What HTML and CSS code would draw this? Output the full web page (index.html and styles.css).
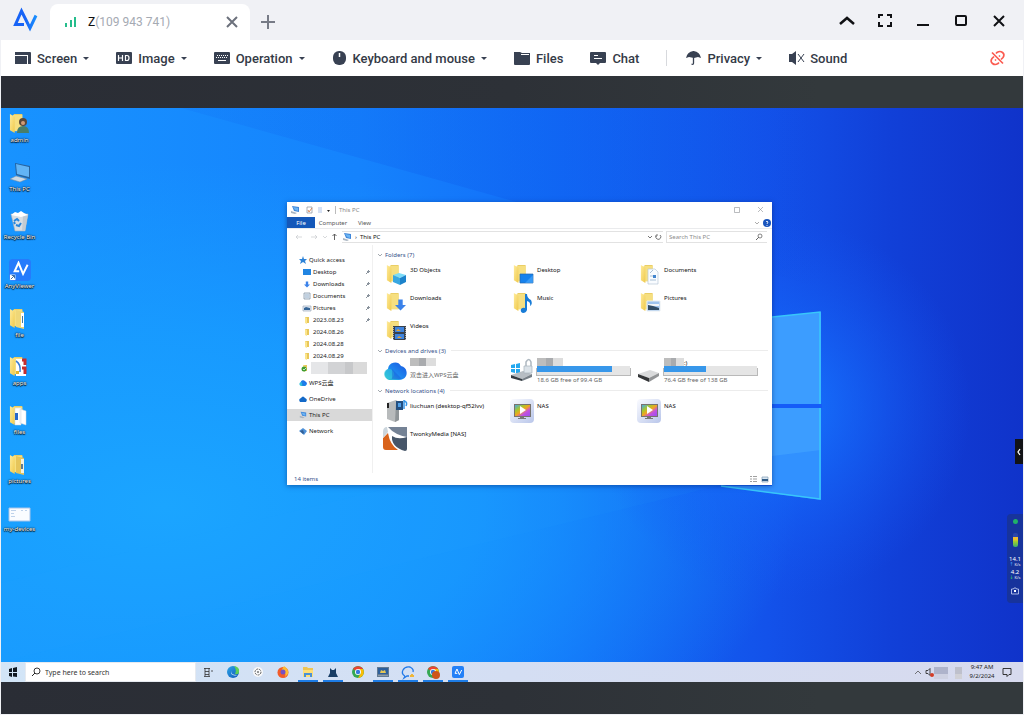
FILE: index.html
```html
<!DOCTYPE html>
<html lang="en">
<head>
<meta charset="utf-8">
<title>AnyViewer</title>
<link rel="stylesheet" href="styles.css">
</head>
<body>
<svg class="defs" aria-hidden="true">
  <defs>
    <linearGradient id="fold" x1="0" y1="0" x2="1" y2="1"><stop offset="0" stop-color="#ffeb9a"/><stop offset="1" stop-color="#efc94c"/></linearGradient>
    <linearGradient id="brandg" gradientUnits="userSpaceOnUse" x1="0" y1="0" x2="26" y2="0"><stop offset="0" stop-color="#1763f6"/><stop offset=".5" stop-color="#1763f6"/><stop offset="1" stop-color="#1a96ff"/></linearGradient>
    <linearGradient id="cloudg" x1="0" y1="1" x2="1" y2="0"><stop offset="0" stop-color="#37d3c9"/><stop offset=".4" stop-color="#1e8cf0"/><stop offset="1" stop-color="#1a55e0"/></linearGradient>
    <linearGradient id="edgeg" x1="0" y1="0" x2="1" y2="1"><stop offset="0" stop-color="#2aa6e8"/><stop offset="1" stop-color="#1257b8"/></linearGradient>
    <linearGradient id="nasg" x1="0" y1="0" x2="1" y2="1"><stop offset="0" stop-color="#fafbff"/><stop offset="1" stop-color="#b9c6ea"/></linearGradient>
    <linearGradient id="rainbow" x1="0" y1="0" x2="1" y2="1"><stop offset="0" stop-color="#45a8e8"/><stop offset=".3" stop-color="#a8c62c"/><stop offset=".5" stop-color="#f2a51f"/><stop offset=".7" stop-color="#c451df"/><stop offset="1" stop-color="#9a50f0"/></linearGradient>
    <symbol id="folder" viewBox="0 0 20 22"><path fill="#e9cc62" d="M5 1h9v18H5z"/><path fill="#f6df80" d="M4 2h10v17H4z"/><path fill="url(#fold)" d="M1 1l5 3v17l-5-3z"/></symbol>
    <symbol id="minifolder" viewBox="0 0 8 8"><path fill="#e8c75a" d="M2 1h4v6H2z"/><path fill="#fbe58c" d="M2 1l2 1v6L2 7z"/></symbol>
    <symbol id="pc" viewBox="0 0 10 10"><path fill="#3f86d9" d="M2 1l7 1v5L4 6z"/><path fill="#6bb4f3" d="M3 2l5 1v3L5 5z"/><path fill="#a9b4c0" d="M1 6l3 1 3 1-2 1-4-1z"/></symbol>
    <symbol id="cloud" viewBox="0 0 24 20"><path fill="url(#cloudg)" d="M6 19a6 6 0 01-1-11 7 7 0 0113-3 7 7 0 012 13q-2 1-4 1z"/><circle cx="6" cy="13" r="5" fill="#34c8dc" opacity=".6"/><path fill="#164cd0" opacity=".35" d="M9 8l10 10H9z"/></symbol>
    <symbol id="arrowd" viewBox="0 0 10 10"><path fill="#3b82ea" d="M3 0h4v5h3L5 10 0 5h3z"/></symbol>
    <symbol id="nas" viewBox="0 0 24 24"><rect width="24" height="24" rx="4" fill="url(#nasg)"/><rect x="4" y="5" width="17" height="13" fill="#77736e"/><rect x="5" y="6" width="15" height="11" fill="url(#rainbow)"/><path fill="#fff" d="M10 7l6 4-6 4z"/><path fill="#777" d="M10 18h4v1h2v1H8v-1h2z"/></symbol>
    <symbol id="av" viewBox="0 0 26 24"><path fill="none" stroke="currentColor" stroke-width="3" stroke-linejoin="miter" d="M11 16H4L10 3l7 17 7-14"/></symbol>
    <symbol id="pin" viewBox="0 0 6 6"><path d="M3 1l2 2M4 2L2 4M2 2l2 2M3 3L1 5" stroke="#8a939d" fill="none"/></symbol>
    <symbol id="chev" viewBox="0 0 6 6"><path d="M1 2l2 2 2-2" stroke="#8c939b" fill="none" stroke-width=".8"/></symbol>
    <symbol id="chrome" viewBox="0 0 12 12"><circle cx="6" cy="6" r="6" fill="#35a853"/><path fill="#e94335" d="M6 6L1 3a6 6 0 0110 0z"/><path fill="#fbbc05" d="M6 3h5a6 6 0 01-5 9l3-5z"/><circle cx="6" cy="6" r="3" fill="#fff"/><circle cx="6" cy="6" r="2.200" fill="#3579e0"/></symbol>
  </defs>
</svg>
<div class="app">
  <header class="titlebar">
    <svg class="brand" viewBox="0 0 26 26"><path fill="none" stroke="url(#brandg)" stroke-width="3" stroke-miterlimit="6" d="M12 17.500H3.500L9.500 4l8.500 17 6-12.500"/></svg>
    <div class="tab">
      <svg class="signal" viewBox="0 0 12 12"><path fill="#25bd8c" d="M0 7h2v4H0zM5 4h2v7H5zM9 1h2v10H9z"/></svg>
      <span class="tab-name">Z<span class="muted">(109 943 741)</span></span>
      <button class="plain" aria-label="Close tab"><svg class="i12" viewBox="0 0 12 12"><path d="M1 1l10 10M11 1L1 11" stroke="#6c717c" stroke-width="2"/></svg></button>
    </div>
    <button class="plain add" aria-label="New tab"><svg class="i14" viewBox="0 0 14 14"><path d="M7 0v14M0 7h14" stroke="#777b86" stroke-width="2"/></svg></button>
    <div class="controls">
      <button class="plain" aria-label="Collapse"><svg class="i16" viewBox="0 0 16 16"><path d="M1 11l7-6 7 6" fill="none" stroke="#101114" stroke-width="2.500"/></svg></button>
      <button class="plain" aria-label="Full screen"><svg class="i16" viewBox="0 0 16 16"><path d="M2 5V2h4M10 2h4v3M14 9v4h-4M6 13H2V9" fill="none" stroke="#101114" stroke-width="2"/></svg></button>
      <button class="plain" aria-label="Minimize"><svg class="i16" viewBox="0 0 16 16"><path d="M2 12h12" stroke="#101114" stroke-width="2"/></svg></button>
      <button class="plain" aria-label="Maximize"><svg class="i16" viewBox="0 0 16 16"><rect x="3" y="3" width="10" height="9" rx="1" fill="none" stroke="#101114" stroke-width="2"/></svg></button>
      <button class="plain" aria-label="Close"><svg class="i16" viewBox="0 0 16 16"><path d="M3 3l10 10M13 3L3 13" stroke="#101114" stroke-width="2"/></svg></button>
    </div>
  </header>
  <nav class="toolbar">
    <button class="tool"><svg class="i16" viewBox="0 0 16 16"><path fill="#384152" d="M0 2h15q1 0 1 1v11h-3V5H0z"/><rect y="6" width="12" height="8" fill="#384152"/></svg>Screen<i class="caret"></i></button>
    <button class="tool"><svg class="i16" viewBox="0 0 16 16"><rect y="2" width="16" height="12" rx="1" fill="#384152"/><path fill="none" stroke="#fff" stroke-width="1.200" d="M2.500 5v6M6.500 5v6M2.500 8h4M9.500 5.500v5h1.500q2 0 2-2.500t-2-2.500z"/></svg>Image<i class="caret"></i></button>
    <button class="tool"><svg class="i16" viewBox="0 0 16 16"><rect y="2" width="16" height="12" rx="1" fill="#384152"/><path stroke="#fff" stroke-dasharray="1 1" d="M3 5.500h11M2 7.500h11"/><path stroke="#fff" d="M4 10.500h8"/></svg>Operation<i class="caret"></i></button>
    <button class="tool"><svg class="i15" viewBox="0 0 15 16"><rect x="1" y="1" width="13" height="14" rx="6" fill="#384152"/><path stroke="#fff" stroke-width="1.500" d="M7.500 3v4"/></svg>Keyboard and mouse<i class="caret"></i></button>
    <button class="tool"><svg class="i16" viewBox="0 0 16 16"><path fill="#384152" d="M0 2h6l2 1h8v11q0 1-1 1H1q-1 0-1-1z"/><path stroke="#fff" d="M7 4.500h8"/></svg>Files</button>
    <button class="tool"><svg class="i16" viewBox="0 0 16 16"><path fill="#384152" d="M1 2h14q1 0 1 1v9q0 1-1 1h-5l-2 2-2-2H1q-1 0-1-1V3q0-1 1-1z"/><path stroke="#fff" d="M4 5.500h4M4 8.500h8"/></svg>Chat</button>
    <span class="divider"></span>
    <button class="tool"><svg class="i15" viewBox="0 0 15 16"><path fill="#384152" d="M0 8q1-6 7.500-7Q14 2 15 8l-3-1-4 1-5-1z"/><path fill="none" stroke="#384152" stroke-width="1.300" d="M7.500 1v12q0 2-2 1"/></svg>Privacy<i class="caret"></i></button>
    <button class="tool"><svg class="i15" viewBox="0 0 15 16"><path fill="#384152" d="M0 4h3l4-3v14l-4-3H0z"/><path stroke="#384152" d="M9 4l6 8M15 4L9 12"/></svg>Sound</button>
    <button class="plain unlink" aria-label="Disconnect"><svg class="i15" viewBox="0 0 15 15"><path fill="none" stroke="#fb5b50" stroke-width="1.700" d="M6 3l1-1q3-2 5.500 0t.5 5l-2 2M9 12l-1 1q-3 2-5.500 0T2 8l2-2M2 2l11 11M9 6l1-1M5 10l1-1"/></svg></button>
  </nav>
  <main class="remote">
    <section class="desktop">
      <svg class="wall" viewBox="0 0 1022 554" preserveAspectRatio="none">
        <defs>
          <linearGradient id="w1"><stop offset="0" stop-color="#1893ff"/><stop offset=".35" stop-color="#1583fd"/><stop offset=".55" stop-color="#126cf8"/><stop offset=".75" stop-color="#1352ea"/><stop offset=".87" stop-color="#1140d8"/><stop offset="1" stop-color="#1033ca"/></linearGradient>
          <radialGradient id="w2" cx=".16" cy=".72" r=".62"><stop offset="0" stop-color="#1ba5ff"/><stop offset=".5" stop-color="#189eff" stop-opacity=".8"/><stop offset="1" stop-color="#189eff" stop-opacity="0"/></radialGradient>
          <radialGradient id="w3" gradientUnits="userSpaceOnUse" cx="780" cy="300" r="190"><stop offset="0" stop-color="#1677ff"/><stop offset="1" stop-color="#1558f5" stop-opacity="0"/></radialGradient>
          <linearGradient id="w5" gradientUnits="userSpaceOnUse" x1="180" y1="0" x2="820" y2="0"><stop offset="0" stop-color="#0c55e8" stop-opacity=".1"/><stop offset=".6" stop-color="#0c55e8" stop-opacity=".3"/><stop offset="1" stop-color="#0c45d8" stop-opacity="0"/></linearGradient>
        </defs>
        <path fill="url(#w1)" d="M0 0h1022v554H0z"/>
        <path fill="url(#w2)" d="M0 0h1022v554H0z"/>
        <path fill="url(#w3)" d="M500 0h522v554H500z"/>
        <path fill="url(#w5)" d="M180 0h640v180L430 70z"/>
        <path fill="#2aa5ff" opacity=".08" d="M0 475L400 377h320L0 554z"/>
        <path fill="#3191ff" d="M771 209l49-5v92h-49zM771 300h49v92l-100-14h51z"/>
        <path fill="#48aaff" opacity=".5" d="M771 209l49-5v92h-49zM771 300h49v42l-49 6z"/>
        <path fill="#155cf8" d="M771 296h50v4h-50z"/>
        <path fill="none" stroke="#38c7fa" stroke-width="1.500" d="M771 209l48-5v92M819 300v91l-99-13"/>
      </svg>
      <ul class="shortcuts">
        <li><svg viewBox="0 0 22 22"><use href="#folder" width="19" height="21"/><circle cx="14" cy="9" r="4" fill="#5b493b"/><path fill="#487e6b" d="M8 20q0-7 6-7t6 7z"/><circle cx="14" cy="10" r="2" fill="#d19b76"/></svg>admin</li>
        <li><svg viewBox="0 0 22 22"><path fill="#26639e" d="M6 1l15 3v13L7 13z"/><path fill="#62b4f5" d="M7 2l13 3v10L8 12z"/><path fill="#cdd9e3" stroke="#798a9a" stroke-width=".5" d="M1 17l6-3 11 3-7 3z"/></svg>This PC</li>
        <li><svg viewBox="0 0 22 22"><path fill="#d9dfe4" stroke="#a4afb8" stroke-width=".6" d="M2 4h17l-3 17H6z"/><path fill="#c2cbd2" d="M14 6l5-2-3 17h-3z"/><path fill="#fff" d="M2 5l4-3 3 1 3-2 3 2 4 2-7 2z"/><path fill="none" stroke="#2886dc" stroke-width="2" d="M5 11l3-2 2 2M12 13l-2 3-3-1M6 14l-1-2"/></svg>Recycle Bin</li>
        <li><svg class="big" viewBox="0 0 24 24"><rect width="24" height="24" rx="4" fill="#257bfc"/><use href="#av" x="3" y="2" width="19" height="17" color="#fff"/><path fill="#fff" d="M1 17h6v6H1z"/><path stroke="#2b609d" d="M2 22l4-4M3 18h3v3" fill="none"/></svg>AnyViewer</li>
        <li><svg viewBox="0 0 22 22"><use href="#folder" width="19" height="21"/><path fill="#efd778" d="M7 2l8 2v17l-8-2z"/><path fill="#fff" d="M12 5h3v14h-3z"/><path fill="#427aa2" d="M13 8h1v7h-1z"/></svg>file</li>
        <li><svg viewBox="0 0 22 22"><use href="#folder" width="19" height="21"/><path fill="#fff" d="M7 3h10v17H7z"/><path fill="none" stroke="#377bd4" stroke-width="1.500" d="M7 5q5 3 4 11"/><path stroke="#c52d2d" stroke-width="3" fill="none" d="M13 4h3v5M13 12h3v6"/><path fill="#e5b62e" d="M7 15h3v3H7z"/></svg>apps</li>
        <li><svg viewBox="0 0 22 22"><use href="#folder" width="19" height="21"/><path fill="#fff" stroke="#cdd5dc" stroke-width=".5" d="M6 3h6v17H6zM11 4l6 2v14l-6-2z"/><path fill="#2868cc" d="M6 8h3v7H6z"/></svg>files</li>
        <li><svg viewBox="0 0 22 22"><use href="#folder" width="19" height="21"/><path fill="#e6c55b" d="M7 2l8 2v17l-8-2z"/><path fill="#f6f2df" d="M12 5h3v14h-3z"/><path fill="#617d92" d="M12 10h2v5h-2z"/></svg>pictures</li>
        <li><svg viewBox="0 0 22 22"><path fill="#fafcff" stroke="#a9c4e8" d="M0 6h21v13H0z"/><path stroke="#bed2eb" d="M2 8.500h5M2 11.500h3M2 14.500h4M12 8.500h2M16 8.500h2"/></svg>my-devices</li>
      </ul>

      <article class="window">
        <header class="win-title">
          <svg class="i10" viewBox="0 0 10 10"><use href="#pc"/></svg>
          <svg class="qa" viewBox="0 0 30 8"><path fill="#fff" stroke="#8a8f98" stroke-width=".7" d="M3 1h5v6H3z"/><path stroke="#cf6d3a" fill="none" stroke-width=".8" d="M4 4l1 2 3-4"/><path fill="#d7e1f3" d="M14 1h4v6h-4z"/><path fill="#222" d="M23 4h3l-1.500 2z"/></svg>
          <span class="win-name">This PC</span>
          <svg class="win-ctl" viewBox="0 0 36 8"><path d="M7.500 1.500h5v5h-5zM31 1l5 5M36 1l-5 5" fill="none" stroke="#8b8f94" stroke-width=".6"/></svg>
        </header>
        <nav class="win-tabs"><button class="file">File</button><button>Computer</button><button>View</button>
          <svg class="help" viewBox="0 0 18 8"><path d="M1 3l2 2 2-2" fill="none" stroke="#888" stroke-width=".7"/><circle cx="13" cy="4" r="4" fill="#1854bd"/><path d="M12 3q1-2 2 0l-1 2M13 6v1" stroke="#fff" fill="none" stroke-width=".8"/></svg></nav>
        <div class="address">
          <svg class="arrows" viewBox="0 0 44 8"><path d="M7 4H1l2-2M1 4l2 2M16 4h6l-2-2M22 4l-2 2M28 3l2 2 2-2" fill="none" stroke="#c5c8cc" stroke-width=".7"/><path d="M39.500 7V1l-2 2M39.500 1l2 2" fill="none" stroke="#555" stroke-width=".9"/></svg>
          <div class="path"><svg class="i10" viewBox="0 0 10 10"><use href="#pc"/></svg><span>›</span><span>This PC</span><svg class="refresh" viewBox="0 0 16 8"><path d="M1 3l2 2 2-2M9 2h2M9 2v2M9 3a2.500 2.500 0 104-1" fill="none" stroke="#666" stroke-width=".9"/></svg></div>
          <label class="find"><input type="text" placeholder="Search This PC" aria-label="Search This PC"><svg class="i8" viewBox="0 0 8 8"><circle cx="5" cy="3" r="2" fill="none" stroke="#666" stroke-width=".8"/><path d="M4 4L1 7" stroke="#666"/></svg></label>
        </div>
        <div class="win-body">
          <aside class="side">
            <a href="#" class="root"><svg viewBox="0 0 8 8"><path fill="#2d83d8" d="M4 0l1 3h3L6 5l1 3-3-2-3 2 1-3-2-2h3z"/></svg>Quick access</a>
            <a href="#"><svg viewBox="0 0 8 8"><path fill="#2185e2" d="M0 1h8v6H0z"/></svg>Desktop<svg class="pin"><use href="#pin"/></svg></a>
            <a href="#"><svg viewBox="0 0 8 8"><use href="#arrowd" x="1" y="1" width="6" height="7"/></svg>Downloads<svg class="pin"><use href="#pin"/></svg></a>
            <a href="#"><svg viewBox="0 0 8 8"><path fill="#eef3f8" stroke="#8494a6" stroke-width=".8" d="M1 1h6v6H1z"/><path stroke="#7b9dbc" d="M2 3h4M2 5h4" stroke-width=".8"/></svg>Documents<svg class="pin"><use href="#pin"/></svg></a>
            <a href="#"><svg viewBox="0 0 8 8"><path fill="#e5edf5" stroke="#8d9caf" stroke-width=".6" d="M0 2h8v5H0z"/><path fill="#356597" d="M1 4l2-1 4 1v2H1z"/></svg>Pictures<svg class="pin"><use href="#pin"/></svg></a>
            <a href="#"><svg><use href="#minifolder"/></svg>2023.08.23<svg class="pin"><use href="#pin"/></svg></a>
            <a href="#"><svg><use href="#minifolder"/></svg>2024.08.26</a>
            <a href="#"><svg><use href="#minifolder"/></svg>2024.08.28</a>
            <a href="#"><svg><use href="#minifolder"/></svg>2024.08.29</a>
            <a href="#" class="synced" aria-label="Hidden folder"><svg viewBox="0 0 8 8"><use href="#minifolder"/><circle cx="3" cy="5" r="2.500" fill="#3e9d34"/><path d="M2 5l1 1 2-2" fill="none" stroke="#fff" stroke-width=".7"/></svg><span class="mosaic wide"></span></a>
            <div class="roots">
              <a href="#" class="root"><svg viewBox="0 0 8 8"><use href="#cloud"/></svg>WPS云盘</a>
              <a href="#" class="root"><svg viewBox="0 0 8 8"><path fill="#1369c8" d="M1 7Q-1 4 2 3q2-3 4 0 3 1 1 4z"/></svg>OneDrive</a>
              <a href="#" class="root current"><svg><use href="#pc"/></svg>This PC</a>
              <a href="#" class="root"><svg viewBox="0 0 8 8"><path fill="#4e91d8" d="M0 4l4-3 4 3-3 4z"/><path fill="#335f94" d="M1 4l3-1 1 3-1 1z"/></svg>Network</a>
            </div>
          </aside>
          <div class="files">
            <h2><svg><use href="#chev"/></svg>Folders (7)</h2>
            <div class="grid">
              <div class="item"><svg viewBox="0 0 24 24"><use href="#folder" x="3" width="18" height="22"/><path fill="#7bdcf8" d="M10 12l6-2 7 2-6 3z"/><path fill="#38a7e1" d="M10 12l7 3v7l-7-3z"/><path fill="#1c83cb" d="M23 12l-6 3v7l6-3z"/></svg><span>3D Objects</span></div>
              <div class="item"><svg viewBox="0 0 24 24"><use href="#folder" x="3" width="18" height="22"/><path fill="#1682ed" stroke="#2669ae" stroke-width=".7" d="M10 11h13v9H10z"/><path fill="#57b1ff" opacity=".5" d="M15 20l8-8v8z"/></svg><span>Desktop</span></div>
              <div class="item"><svg viewBox="0 0 24 24"><use href="#folder" x="3" width="18" height="22"/><path fill="#f9fcff" stroke="#b8c7d7" stroke-width=".7" d="M11 6h7l3 3v12H11z"/><path d="M13 10l3-3M13 13h3M13 17h6" stroke="#a9bfd6"/><path fill="#4285ce" d="M16 12h3v3h-3z"/></svg><span>Documents</span></div>
              <div class="item"><svg viewBox="0 0 24 24"><use href="#folder" x="3" width="18" height="22"/><use href="#arrowd" x="12" y="8" width="11" height="12"/></svg><span>Downloads</span></div>
              <div class="item"><svg viewBox="0 0 24 24"><use href="#folder" x="3" width="18" height="22"/><path d="M17 3q0 4 4 6 2 4-1 6 1-4-3-5v9q-1 3-4 3-3-1-2-4 2-2 4-1V3z" fill="#187cd7"/></svg><span>Music</span></div>
              <div class="item"><svg viewBox="0 0 24 24"><use href="#folder" x="3" width="18" height="22"/><path fill="#9fc4ee" stroke="#e8eef2" d="M10 10h13v10H10z"/><path fill="#f2f5f8" d="M11 13h11v2H11z"/><path fill="#324d65" d="M11 14l5 1 6 2v2H11z"/></svg><span>Pictures</span></div>
              <div class="item"><svg viewBox="0 0 24 24"><use href="#folder" x="3" width="18" height="22"/><path fill="#39424c" d="M10 7h13v14H10z"/><path fill="#3e84df" d="M12 8h9v5h-9zM12 15h9v5h-9z"/><path d="M10.500 8v13M22.500 8v13" stroke="#aaa" stroke-dasharray="1 1"/><path fill="#e1a235" d="M15 10l3 2h-5zM16 17l3 2h-5z"/></svg><span>Videos</span></div>
            </div>
            <h2><svg><use href="#chev"/></svg>Devices and drives (3)</h2>
            <div class="grid drives">
              <div class="item"><svg viewBox="0 0 24 24"><use href="#cloud" x="0" y="3" width="24" height="20"/></svg><span><b class="mosaic"></b><em class="tall">双击进入WPS云盘</em></span></div>
              <div class="item"><svg viewBox="0 0 24 24"><path fill="#24a8ef" d="M1 7l4-1v4H1zM6 6l4-1v5H6zM1 11h4v4l-4-1zM6 11h4v5l-4-1z"/><path fill="#b7bdc3" d="M1 17l12-4 9 3-10 5z"/><path fill="#353c43" d="M1 17l11 4v2L1 20z"/><path fill="#777f87" d="M12 21l10-5v3l-10 4z"/><path fill="none" stroke="#aeb8c0" stroke-width="1.500" d="M16 8V4q3-5 5 0v5"/><path fill="#dce3e9" stroke="#a7b2bc" stroke-width=".7" d="M14 8h8v7h-8z"/></svg><span><b class="mosaic"></b><meter min="0" max="100" value="81">81%</meter><em>18.6 GB free of 99.4 GB</em></span></div>
              <div class="item"><svg viewBox="0 0 24 24"><path fill="#d9dadb" d="M1 16l12-4 9 3-10 5z"/><path fill="#343638" d="M1 16l11 4v4L1 19z"/><path fill="#929496" d="M12 20l10-5v3l-10 6z"/></svg><span><span class="drive"><b class="mosaic short"></b>:)</span><meter min="0" max="100" value="45">45%</meter><em>76.4 GB free of 138 GB</em></span></div>
            </div>
            <h2><svg><use href="#chev"/></svg>Network locations (4)</h2>
            <div class="grid">
              <div class="item"><svg viewBox="0 0 24 24"><path fill="#b8bbbc" d="M4 4l9-3 3 2v18l-4 2-8-3z"/><path fill="#8f9598" d="M13 4l3-1v18l-4 2z"/><path fill="#222" d="M4 4h2v5H4z"/><path fill="#234f80" d="M13 2h7v9h-7z"/><path fill="#4f9fe8" d="M15 4h3v4h-3z"/><path fill="none" stroke="#3695e7" stroke-width="1.500" d="M21 1v9M21 2q4 1 2 5"/></svg><span>liuchuan (desktop-qf52lvv)</span></div>
              <div class="item"><svg><use href="#nas"/></svg><span>NAS</span></div>
              <div class="item"><svg><use href="#nas"/></svg><span>NAS</span></div>
              <div class="item"><svg viewBox="0 0 24 24"><path fill="#748295" d="M5 0h19v10Q12 8 5 0z"/><path fill="#475669" d="M9 9q6 4 15 1v12q0 2-2 2Q8 20 9 9z"/><path fill="#d9631c" d="M0 11l5-5q2 12 10 17H3q-3 0-3-3z"/><path fill="#ccd6dd" d="M0 5q0-5 4-5l1 5-5 6z"/></svg><span>TwonkyMedia [NAS]</span></div>
            </div>
          </div>
        </div>
        <footer class="win-status"><span>14 items</span><svg class="views" viewBox="0 0 20 8"><path d="M1 1.500h2M4 1.500h4M1 4h2M4 4h4M1 6.500h2M4 6.500h4" stroke="#888" stroke-width=".8"/><path fill="#dbe7f2" stroke="#809bb4" stroke-width=".7" d="M13 2h6v5h-6z"/><path fill="#315c86" d="M13 4h6v2h-6z"/></svg></footer>
      </article>

      <button class="drawer" aria-label="Open panel"><svg viewBox="0 0 8 8"><path d="M5 1L3 4l2 3" stroke="#fff" fill="none" stroke-width="1.300"/></svg></button>
      <div class="monitor">
        <i class="dot"></i><i class="level"></i>
        <div class="rate">14.1<small><b class="up">↑</b> K/s</small></div>
        <div class="rate">4.2<small><b class="down">↓</b> K/s</small></div>
        <svg class="i8" viewBox="0 0 8 8"><path d="M.5 2h2l.5-1h2l.5 1h2v5h-7z" fill="none" stroke="#ccd7f7" stroke-width=".8"/><path fill="#fff" d="M3 3h2v2H3z"/></svg>
      </div>
    </section>
    <footer class="taskbar">
      <button class="start" aria-label="Start"><svg viewBox="0 0 10 10"><path fill="#101820" d="M1 2l3-1v4H1zM5 1l4-1v5H5zM1 6h3v4L1 9zM5 6h4v4l-4-.5z"/></svg></button>
      <label class="search"><svg class="i10" viewBox="0 0 10 10"><circle cx="6" cy="4" r="3" fill="none" stroke="#222" stroke-width=".9"/><path d="M4 6L1 9" stroke="#222"/></svg><input type="text" placeholder="Type here to search" aria-label="Type here to search"></label>
      <div class="apps">
        <button aria-label="Task view"><svg viewBox="0 0 14 14"><path d="M3 3.500h6M4 6.500h4M4 9.500h4M3 11.500h6M4 3v8M8 3v8M11 5v2" stroke="#333" fill="none" stroke-width=".8"/></svg></button>
        <button aria-label="Edge"><svg viewBox="0 0 14 14"><circle cx="7" cy="7" r="6" fill="url(#edgeg)"/><path fill="#5fcf59" d="M8 1q6 1 5 6 0 3-4 2 2-4-1-8z"/><path fill="#dcebf8" d="M6 6q-2 4 5 4-2 1-4 0-3-1-1-4z"/></svg></button>
        <button aria-label="ChatGPT"><svg viewBox="0 0 14 14"><circle cx="7" cy="7" r="5" fill="#f8f9fb"/><circle cx="7" cy="7" r="3" fill="none" stroke="#666" stroke-dasharray="2 1"/><circle cx="7" cy="7" r="1" fill="#777"/></svg></button>
        <button aria-label="Firefox"><svg viewBox="0 0 14 14"><circle cx="7" cy="7.500" r="5.500" fill="#f25b2b"/><path fill="#ffbc32" d="M8 1q5 3 4 8l-3 3q2-5-4-6z"/><circle cx="7" cy="7" r="2.500" fill="#7650c4"/></svg></button>
        <button class="open" aria-label="File Explorer"><svg viewBox="0 0 14 14"><path fill="#efc654" d="M2 2h4l1 1h5v4H2z"/><path fill="#ffdf78" d="M2 5h10v7H2z"/><path fill="#4b91d6" d="M3 8h8v4H9v-2H5v2H3z"/></svg></button>
        <button class="open" aria-label="Cat app"><svg viewBox="0 0 14 14"><path fill="#193e66" d="M4 3l2 2h2l2-2v5l2 4H2l2-4z"/></svg></button>
        <button aria-label="Chrome"><svg viewBox="0 0 14 14"><use href="#chrome" x="1" y="1" width="12" height="12"/></svg></button>
        <button class="open" aria-label="Remote"><svg viewBox="0 0 14 14"><path fill="#637b94" d="M1 2h12v10H1z"/><path fill="#2d5f9c" d="M2 3h10v6H2z"/><path fill="#e5c656" d="M4 8l1-3 2 1 2-1 1 3z"/><path fill="#8d9ba9" d="M2 10h10v1H2z"/></svg></button>
        <button class="open" aria-label="Messenger"><svg viewBox="0 0 14 14"><path d="M4 11q-4-2-2-6 2-4 7-3 4 2 3 5M4 11l-1 2 3-2h2" fill="none" stroke="#2379e8" stroke-width="1.300"/><path fill="#efb638" d="M9 10h1V9h2v1h1v2H9z"/></svg></button>
        <button class="open" aria-label="Chrome profile"><svg viewBox="0 0 14 14"><use href="#chrome" x="1" y="1" width="12" height="12"/><circle cx="10" cy="10" r="4" fill="#ce5419"/></svg></button>
        <button class="open" aria-label="AnyViewer"><svg viewBox="0 0 14 14"><rect x="1" y="1" width="12" height="12" rx="2" fill="#2380f7"/><use href="#av" x="2" y="3" width="10" height="8" color="#fff"/></svg></button>
      </div>
      <div class="tray">
        <svg class="status" viewBox="0 0 50 14"><path d="M3 9l3-3 3 3" fill="none" stroke="#555" stroke-width=".8"/><path fill="none" stroke="#222" stroke-width=".8" d="M14 5.500h2l2-2v7l-2-2h-2z"/><circle cx="20" cy="10" r="2" fill="#d33d27"/><path fill="#aeb3cb" d="M22 2h14v7H22z"/><path fill="#ced1e2" d="M22 9h14v5H22z"/><path fill="#bec0cc" d="M43 2h7v7h-7z"/><path fill="#d0d0d6" d="M43 9h7v5h-7z"/></svg>
        <time>9:47 AM<br>9/2/2024</time>
        <svg class="i10" viewBox="0 0 10 10"><path d="M1 1.500h8v6H7l-2 2v-2H1z" fill="none" stroke="#222" stroke-width=".9"/></svg>
      </div>
    </footer>
  </main>
</div>
</body>
</html>
```
FILE: styles.css
```css
* { box-sizing: border-box; }
body { margin: 0; font-family: Roboto, "Noto Sans CJK SC", sans-serif; font-size: 13px; background: #f0f1f5; }
button { font: inherit; color: inherit; border: 0; padding: 0; background: none; }
svg { display: block; flex: none; overflow: visible; }
ul, h2 { margin: 0; padding: 0; list-style: none; }
.defs { position: absolute; width: 0; height: 0; }
.app { display: flex; flex-direction: column; min-height: 100vh; padding: 0 1px 1px; }
.plain { display: flex; align-items: center; justify-content: center; }
.i8 { width: 8px; height: 8px; }
.i10 { width: 10px; height: 10px; }
.i12 { width: 12px; height: 12px; }
.i14 { width: 14px; height: 14px; }
.i15 { width: 15px; height: 16px; }
.i16 { width: 16px; height: 16px; }

.titlebar { display: flex; align-items: stretch; height: 40px; padding: 4px 16px 0 11px; }
.titlebar .controls { padding-bottom: 2px; }
.brand { width: 26px; height: 26px; margin: 3px 12px 0 0; }
.tab { display: flex; align-items: center; width: 200px; padding: 0 12px 0 15px; background: #fff; border-radius: 8px 8px 0 0; }
.signal { width: 12px; height: 12px; }
.tab-name { flex: 1; margin-left: 11px; font-size: 12px; color: #111; }
.muted { color: #a5aab3; }
.add { width: 36px; }
.controls { display: flex; gap: 22px; margin-left: auto; }

.toolbar { display: flex; align-items: center; gap: 27px; height: 36px; padding: 0 18px 0 14px; background: #fff; }
.tool { display: flex; align-items: center; gap: 6px; height: 24px; color: #343a46; font-weight: 500; white-space: nowrap; }
.caret { border: 3px solid transparent; border-top-color: #384152; border-bottom: 0; }
.divider { width: 1px; height: 16px; margin-right: -8px; background: #d7d9dd; }
.unlink { margin-left: auto; }

.remote { flex: 1; display: flex; flex-direction: column; padding: 32px 0; background: linear-gradient(90deg, #2a2d35, #2d3137 50%, #33393c 80%); font-family: "Noto Sans", "Noto Sans CJK SC", sans-serif; }
.desktop { position: relative; flex: 1; min-height: 520px; overflow: hidden; font-size: 6px; line-height: 8px; }
.wall { position: absolute; width: 100%; height: 100%; }
.shortcuts { position: relative; display: grid; grid-auto-rows: 1fr; width: 37px; height: 438px; margin-top: 5px; }
.shortcuts li { display: flex; flex-direction: column; align-items: center; gap: 1px; color: #fff; white-space: nowrap; text-shadow: 0 0 2px #000, 0 1px 1px #000, 0 0 1px #000; }
.shortcuts svg { width: 22px; height: 22px; }
.shortcuts .big { width: 24px; height: 22px; }

.window { position: absolute; left: 286px; top: 94px; display: flex; flex-direction: column; width: 485px; color: #111; background: #fff; box-shadow: 0 1px 5px rgba(0, 30, 100, .5); }
.win-title { display: flex; align-items: center; height: 15px; padding: 0 9px 0 3px; color: #888; }
.qa { width: 30px; height: 8px; margin-left: 4px; }
.win-name { padding-left: 3px; margin-left: 1px; border-left: 1px solid #bbb; }
.win-ctl { width: 36px; height: 8px; margin-left: auto; }
.win-tabs { display: flex; align-items: center; height: 12px; border-bottom: 1px solid #eaebed; color: #555; }
.win-tabs button { width: 36px; height: 11px; }
.win-tabs .file { width: 28px; color: #fff; background: #1558b9; }
.win-tabs button:nth-child(3) { width: 27px; }
.help { width: 18px; height: 8px; margin-left: auto; }
.address { display: flex; align-items: center; gap: 3px; height: 16px; padding: 0 5px 0 8px; }
.arrows { width: 44px; height: 8px; }
.path, .find { display: flex; align-items: center; height: 12px; border: 1px solid #e2e2e2; }
.path { flex: 1; gap: 3px; padding: 0; border-width: 1px 0; }
.refresh { width: 16px; height: 8px; margin-left: auto; }
.find { width: 101px; padding: 0 4px 0 2px; border-right: 0; }
input { flex: 1; min-width: 0; border: 0; padding: 0; outline: 0; font: inherit; color: inherit; background: none; }
.find input::placeholder { color: #8b8b8b; }
.win-body { display: flex; height: 228px; }
.side { width: 86px; padding-top: 9px; border-right: 1px solid #f0f0f0; }
.side a { display: flex; align-items: center; gap: 2px; height: 12px; padding: 0 1px 0 16px; color: #222; text-decoration: none; white-space: nowrap; }
.side a svg { width: 8px; height: 8px; }
.side .root { padding-left: 12px; }
.side .synced { padding-left: 14px; }
.side a .pin { width: 6px; height: 6px; margin-left: auto; }
.roots { display: grid; gap: 4px; padding-top: 3px; }
.side .current { background: #d9d9d9; }
.files { flex: 1; padding: 4px 4px 0 4px; }
.files h2 { display: flex; align-items: center; gap: 2px; height: 11px; color: #35518b; font-size: 6px; font-weight: 400; }
.files h2 svg { width: 6px; height: 6px; }
.files h2::after { content: ""; flex: 1; height: 1px; background: #ececec; margin-left: 3px; }
.files h2:first-child::after { display: none; }
.grid { display: grid; grid-template-columns: repeat(3, 1fr); grid-auto-rows: 28px; padding: 1px 4px 0 6px; }
.item { display: flex; gap: 3px; white-space: nowrap; }
.item > svg { width: 24px; height: 24px; margin-top: 2px; }
.item > span { padding-top: 5px; }
.drives .item > svg { margin-top: 1px; }
.drives .item > span { padding-top: 2px; }
.item em { display: block; font-style: normal; color: #666; }
.item .tall { margin-top: 5px; }
.mosaic { display: block; width: 26px; height: 8px; background: linear-gradient(90deg, #bdbdbd 0 35%, #a9abae 35% 60%, #ddd 60%); }
.item .mosaic { margin-top: -1px; }
.item meter { margin: 2px 0 0 -1px; }
.mosaic.wide { width: 56px; height: 12px; background: linear-gradient(90deg, #e5e6e8 0 30%, #d2d3d5 30% 60%, #c7c8ca 60% 75%, #dadada 75%); }
.mosaic.short { width: 20px; }
.drive { display: flex; height: 7px; }
meter { display: block; appearance: none; width: 95px; height: 8px; border: 1px solid #b9b9b9; background: #e5e5e5; }
meter::-webkit-meter-inner-element { display: block; }
meter::-webkit-meter-bar { height: 6px; border: 0; border-radius: 0; background: #e5e5e5; }
meter::-webkit-meter-optimum-value { background: #3797ea; }
.win-status { display: flex; align-items: center; justify-content: space-between; height: 12px; padding: 0 3px 0 7px; color: #35518b; }
.views { width: 20px; height: 8px; }

.drawer { position: absolute; right: 0; top: 331px; display: grid; place-items: center; width: 8px; height: 25px; background: #121317; }
.drawer svg { width: 8px; height: 8px; }
.monitor { position: absolute; right: 0; top: 406px; display: flex; flex-direction: column; align-items: center; gap: 4px; width: 16px; height: 89px; padding-top: 5px; border-radius: 4px 0 0 4px; background: #17339c; color: #fff; line-height: 6px; text-align: center; }
.monitor small { display: block; font-size: 4px; line-height: 5px; white-space: nowrap; }
.dot { width: 5px; height: 5px; border-radius: 50%; background: #20b268; }
.level { width: 5px; height: 14px; margin: 5px 0; border-radius: 2px; background: linear-gradient(#2c46aa 25%, #f1bd2f 26% 45%, #a2cf2b 60%, #38ad70); }
.rate { margin-bottom: -2px; }
.up { color: #45a4ff; }
.down { color: #34d267; }
.monitor .i8 { margin-top: 5px; }

.taskbar { display: flex; height: 20px; background: linear-gradient(90deg, #d2e5f7, #d4def3 50%, #d7daee); font-size: 7px; }
.start { display: grid; place-items: center; width: 24px; }
.start svg { width: 10px; height: 10px; }
.search { display: flex; align-items: center; gap: 4px; width: 171px; padding: 0 5px; background: #fff; border: 1px solid #e6eaf0; }
.search input::placeholder { color: #333; }
.apps { display: flex; gap: 5px; margin-left: 2px; }
.apps button { display: grid; place-items: center; width: 20px; padding-top: 2px; border-bottom: 2px solid transparent; }
.apps .open { border-color: transparent transparent #1d7ce5; }
.apps svg { width: 14px; height: 14px; }
.tray { display: flex; align-items: center; gap: 6px; margin-left: auto; padding-right: 11px; }
.status { width: 50px; height: 14px; }
time { min-width: 28px; font-size: 6px; line-height: 9px; text-align: center; color: #222; }
```
